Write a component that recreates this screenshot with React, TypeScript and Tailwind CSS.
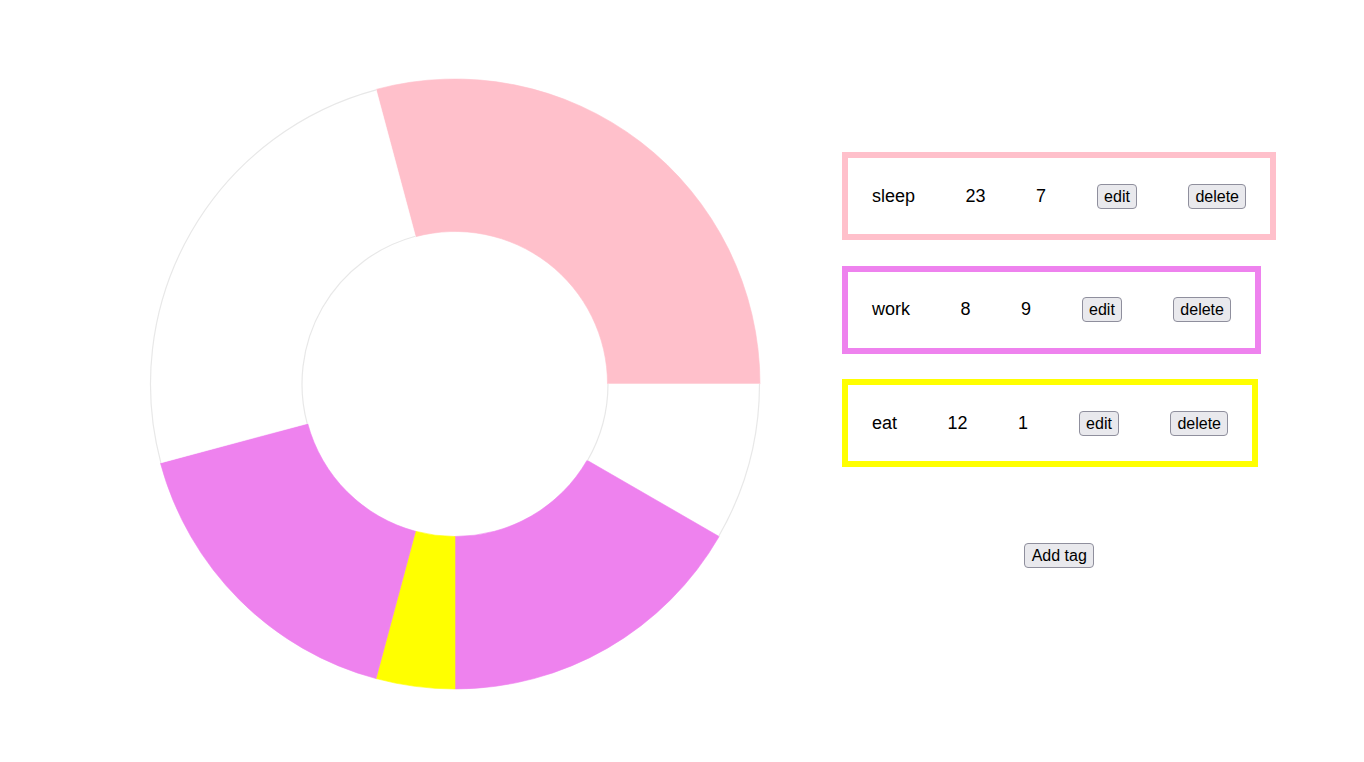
import React from "react";

const CX = 306;
const CY = 306;
const R = 305;
const RI = 152.5;

function pt(a: number, rad: number): [number, number] {
  const t = (a * Math.PI) / 180;
  return [CX + rad * Math.sin(t), CY - rad * Math.cos(t)];
}

function sector(a0: number, a1: number) {
  const large = a1 - a0 > 180 ? 1 : 0;
  const [x0, y0] = pt(a0, R);
  const [x1, y1] = pt(a1, R);
  const [x2, y2] = pt(a1, RI);
  const [x3, y3] = pt(a0, RI);
  return `M ${x0} ${y0} A ${R} ${R} 0 ${large} 1 ${x1} ${y1} L ${x2} ${y2} A ${RI} ${RI} 0 ${large} 0 ${x3} ${y3} Z`;
}

function arcPath(a0: number, a1: number, rad: number) {
  const large = a1 - a0 > 180 ? 1 : 0;
  const [x0, y0] = pt(a0, rad);
  const [x1, y1] = pt(a1, rad);
  return `M ${x0} ${y0} A ${rad} ${rad} 0 ${large} 1 ${x1} ${y1}`;
}

const segments = [
  { a0: -15, a1: 90, color: "#ffc0cb" },
  { a0: 90, a1: 120, color: "#ffffff", empty: true },
  { a0: 120, a1: 180, color: "#ee82ee" },
  { a0: 180, a1: 195, color: "#ffff00" },
  { a0: 195, a1: 255, color: "#ee82ee" },
  { a0: 255, a1: 345, color: "#ffffff", empty: true },
];

function Donut() {
  return (
    <svg width={612} height={612} viewBox="0 0 612 612">
      {segments.map((s, i) => (
        <path key={i} d={sector(s.a0, s.a1)} fill={s.color} stroke={s.color} strokeWidth={0.6} />
      ))}
      {segments
        .filter((s) => s.empty)
        .map((s, i) => (
          <g key={"g" + i}>
            <path d={arcPath(s.a0, s.a1, R - 0.5)} fill="none" stroke="#e8e8e8" strokeWidth={1.2} />
            <path d={arcPath(s.a0, s.a1, RI + 0.5)} fill="none" stroke="#e8e8e8" strokeWidth={1.2} />
          </g>
        ))}
    </svg>
  );
}

const tags = [
  { name: "sleep", start: "23", end: "7", border: "border-[#ffc0cb]" },
  { name: "work", start: "8", end: "9", border: "border-[#ee82ee]" },
  { name: "eat", start: "12", end: "1", border: "border-[#ffff00]" },
];

function Btn({ children }: { children: React.ReactNode }) {
  return (
    <button className="h-[25px] px-[6.5px] text-[16px] leading-[19px] bg-[#e9e9ed] border border-[#8f8f9d] rounded-[4px] text-black">
      {children}
    </button>
  );
}

export default function App() {
  return (
    <div
      className="w-[1364px] h-[762px] bg-white flex items-start pt-[78px] pl-[149px] text-black"
      style={{ fontFamily: '"Liberation Sans", Arial, sans-serif' }}
    >
      <Donut />
      <div className="ml-[81px] pt-[74px] flex flex-col">
        <div className="flex flex-col items-start gap-[25.5px]">
          {tags.map((t) => (
            <div
              key={t.name}
              className={`inline-flex items-center h-[88px] border-[6px] ${t.border} pl-[24px] pr-[24px] gap-[50.5px] text-[18px]`}
            >
              <span>{t.name}</span>
              <span>{t.start}</span>
              <span>{t.end}</span>
              <Btn>edit</Btn>
              <Btn>delete</Btn>
            </div>
          ))}
        </div>
        <div className="flex justify-center mt-[76px]">
          <Btn>Add tag</Btn>
        </div>
      </div>
    </div>
  );
}
